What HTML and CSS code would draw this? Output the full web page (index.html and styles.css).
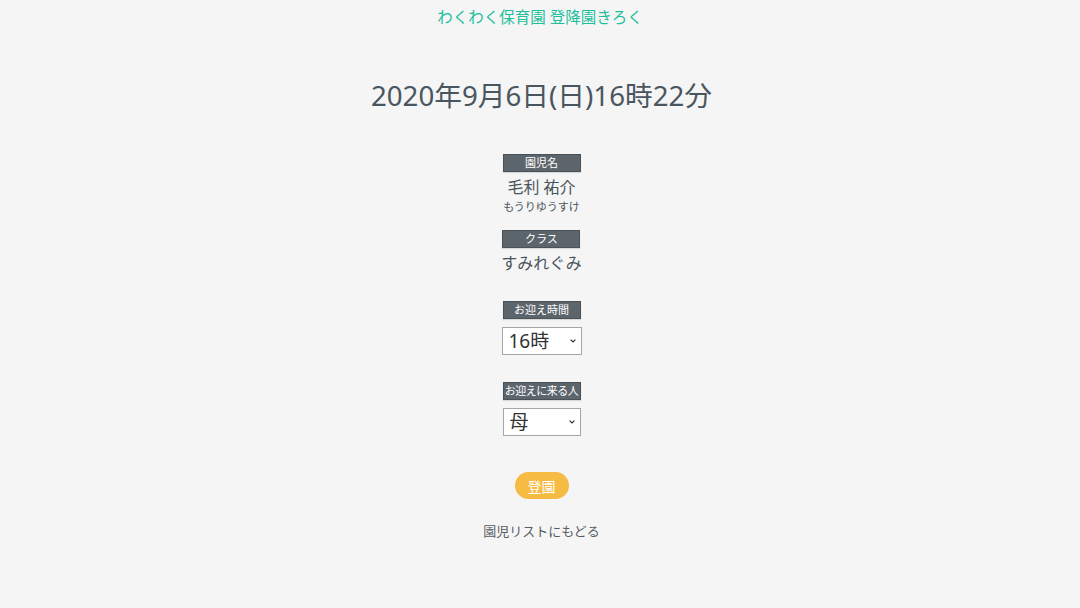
FILE: index.html
```html
<!DOCTYPE html>
<html lang="ja">
<head>
<meta charset="utf-8">
<link rel="stylesheet" href="styles.css">
</head>
<body>
<header class="site-title">わくわく保育園 登降園きろく</header>
<main class="page">
  <h1 class="datetime">2020年9月6日(日)16時22分</h1>
  <section class="field field-name">
    <div class="label">園児名</div>
    <div class="value">毛利 祐介</div>
    <div class="kana">もうりゆうすけ</div>
  </section>
  <section class="field field-class">
    <div class="label">クラス</div>
    <div class="value">すみれぐみ</div>
  </section>
  <section class="field field-time">
    <div class="label">お迎え時間</div>
    <div class="select-wrap select-time">
      <select class="select"><option>16時</option></select>
      <svg class="chev" viewBox="0 0 6 4" width="6" height="4"><path d="M0.6 0.6 L3 3 L5.4 0.6" fill="none" stroke="#333" stroke-width="1.2"/></svg>
    </div>
  </section>
  <section class="field field-person">
    <div class="label label-tight">お迎えに来る人</div>
    <div class="select-wrap select-person">
      <select class="select"><option>母</option></select>
      <svg class="chev" viewBox="0 0 6 4" width="6" height="4"><path d="M0.6 0.6 L3 3 L5.4 0.6" fill="none" stroke="#333" stroke-width="1.2"/></svg>
    </div>
  </section>
  <button class="submit">登園</button>
  <a class="back" href="#">園児リストにもどる</a>
</main>
</body>
</html>
```
FILE: styles.css
```css
html, body {
  margin: 0;
  padding: 0;
  background: #f5f5f5;
  font-family: "Noto Sans", "Noto Sans CJK JP", sans-serif;
  color: #4a545c;
}
.site-title {
  text-align: center;
  color: #1fbf9c;
  font-size: 15.5px;
  line-height: 20px;
  padding-top: 7px;
}
.page {
  display: flex;
  flex-direction: column;
  align-items: center;
  padding-left: 3px;
}
.datetime {
  margin: 50px 0 0 0;
  font-size: 27.7px;
  font-weight: 400;
  line-height: 36px;
  color: #4a565f;
}
.field {
  display: flex;
  flex-direction: column;
  align-items: center;
}
.field-name { margin-top: 41px; }
.field-class { margin-top: 16px; }
.field-time { margin-top: 27px; }
.field-person { margin-top: 27px; }
.label {
  width: 78px;
  height: 18px;
  box-sizing: border-box;
  background: #5c656c;
  border: 1px solid #4a5258;
  box-shadow: 0 1px 1px rgba(0,0,0,0.12);
  color: #ffffff;
  font-size: 11px;
  line-height: 16px;
  text-align: center;
  white-space: nowrap;
}
.label-tight { letter-spacing: -0.5px; }
.value {
  font-size: 16px;
  line-height: 22px;
  margin-top: 4px;
  color: #4a545c;
}
.kana {
  margin-top: 2px;
  font-size: 11px;
  line-height: 14px;
  color: #4a545c;
}
.select-wrap {
  position: relative;
  margin-top: 8px;
  height: 28px;
}
.select-time { width: 80px; }
.select-person { width: 78px; }
.select {
  display: block;
  width: 100%;
  height: 28px;
  box-sizing: border-box;
  -webkit-appearance: none;
  appearance: none;
  padding: 0 0 0 6px;
  font-family: "Noto Sans", "Noto Sans CJK JP", sans-serif;
  font-size: 19px;
  color: #333;
  background: #ffffff;
  border: 1px solid #a6a6a6;
  border-radius: 0;
}
.chev {
  position: absolute;
  right: 6px;
  top: 12px;
  pointer-events: none;
}
.submit {
  margin-top: 36px;
  width: 54px;
  height: 27px;
  border: none;
  border-radius: 14px;
  background: #f6bb42;
  color: #ffffff;
  font-family: "Noto Sans", "Noto Sans CJK JP", sans-serif;
  font-size: 14px;
  padding: 0;
}
.back {
  margin-top: 23px;
  font-size: 13px;
  line-height: 18px;
  color: #555c62;
  text-decoration: none;
}
```
